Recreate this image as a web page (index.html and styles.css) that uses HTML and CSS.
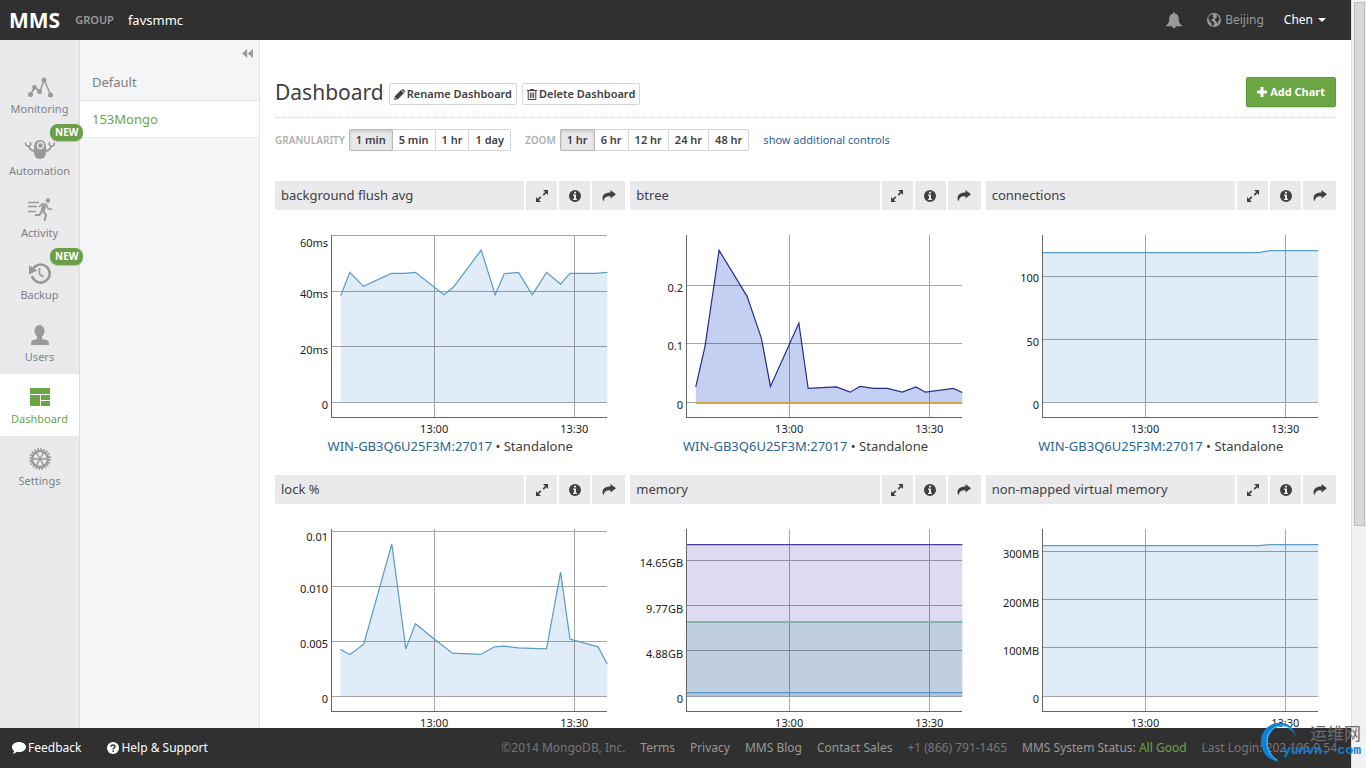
FILE: index.html
```html
<!DOCTYPE html>
<html lang="en">
<head>
<meta charset="utf-8">
<title>Dashboard | MMS</title>
<link rel="stylesheet" href="styles.css">
</head>
<body>
<svg class="defs" width="0" height="0" aria-hidden="true">
  <symbol id="expand" viewBox="0 0 12 12"><path d="M7 0h5v5l-1.700-1.700-2.500 2.500-1.200-1.200 2.500-2.500zM5 12H0V7l1.700 1.700 2.500-2.500 1.200 1.200-2.500 2.500z"/></symbol>
  <symbol id="info" viewBox="0 0 12 12"><path fill-rule="evenodd" d="M6 0a6 6 0 1 1 0 12A6 6 0 0 1 6 0zM5 1.700v1.800h2V1.700zM4 4.600v1.200h1v2.900H4V10h4V8.700H7V4.600z"/></symbol>
  <symbol id="share" viewBox="0 0 14 12"><path d="M8.500 0L14 4.300 8.500 8.600V6.200C4.800 6 2.600 7 1.300 11.500-.8 6.500 1.500 2.500 8.500 2.500z"/></symbol>
  <symbol id="pencil" viewBox="0 0 11 11"><path fill-rule="evenodd" d="M0 11l.8-3.800L7 1l3 3-6.200 6.200zM1.500 8.200l-.3 1.600 1.600-.3zM7.600.5l.3-.3c.4-.3.9-.3 1.300 0l1.600 1.600c.3.4.3.900 0 1.300l-.3.300z"/></symbol>
  <symbol id="trash" viewBox="0 0 10 11"><path d="M0 1.500h10M3.300 1.300V.5h3.400v.8M1.200 2v8.500h7.600V2M3.300 3.500V9M5 3.500V9M6.700 3.500V9" fill="none" stroke="currentColor"/></symbol>
</svg>
<div class="window">
  <div class="app">
    <header class="topbar">
      <a class="brand" href="#">MMS</a>
      <span class="group-label">GROUP</span>
      <a class="group-name" href="#">favsmmc</a>
      <div class="account">
        <button class="plain bell" aria-label="Notifications"><svg width="16" height="17" viewBox="0 0 16 17"><path fill="currentColor" d="M7 1.500C7-.2 9-.2 9 1.500c2.800.7 3.800 2.800 3.800 5.500 0 3.300.8 4.700 3.200 6.500v.8H9.800c-.3 2.700-3.300 2.700-3.600 0H0v-.8C2.400 11.700 3.200 10.300 3.200 7c0-2.700 1-4.800 3.800-5.500z"/></svg></button>
        <a class="zone" href="#"><svg width="14" height="14" viewBox="0 0 14 14"><circle cx="7" cy="7" r="7" fill="#999"/><path fill="#303030" d="M1.200 4.500L3 2.200l2-.7 1.500.7-1 1.300L7 5 5.200 6.200 4 7.500l2.200 1.300 1.200 1.400-1.200 3-1.400-.6L4.500 10 2.600 8.500zM9 2l2 .8L12.800 6l-1.500 2-.8 3-1.200-2.500L8 7.500 8.200 5.500 10 4.800z"/></svg>Beijing</a>
        <button class="plain user">Chen<span class="caret"></span></button>
      </div>
    </header>
    <div class="body">
      <nav class="nav">
        <a href="#"><svg width="26" height="22" viewBox="0 0 26 22"><path d="M3.500 18.500L8 11l5 5 4-12.500 7 16" fill="none" stroke="currentColor" stroke-width="1.500"/><g fill="currentColor"><circle cx="3.500" cy="18.500" r="2.500"/><circle cx="7.500" cy="11.500" r="2.400"/><circle cx="12.500" cy="15.500" r="2.500"/><circle cx="17" cy="4" r="2.500"/><circle cx="23.500" cy="19" r="2.500"/></g></svg>Monitoring</a>
        <a href="#"><span class="badge">NEW</span><svg width="32" height="22" viewBox="0 0 32 22"><rect x="10" y="2" width="12" height="19" rx="6" fill="currentColor"/><circle cx="16.500" cy="7.500" r="3" fill="none" stroke="#eaeaec" stroke-width="1.400"/><path d="M10 13C7 12.500 5.500 11 4.500 7.500M22 13c3-.5 4.500-2 5.500-5.500" fill="none" stroke="currentColor" stroke-width="2"/><path d="M1.500 4.500L2 7.500l3 .7 2-2-.7-2.200M30.500 4.500L30 7.500l-3 .7-2-2 .7-2.200" fill="none" stroke="currentColor" stroke-width="1.500"/></svg>Automation</a>
        <a href="#"><svg width="26" height="24" viewBox="0 0 26 24"><g fill="none" stroke="currentColor"><path d="M1 4.500h11M1 8.500h9M1 13.500h8" stroke-width="1.300"/><path d="M12 9l3-3h4l2 4.500 4 1" stroke-width="1.600"/><path d="M17.500 7L15.500 13" stroke-width="4"/><path d="M15 13l-2.500 4H8M16 13l3 4-1.500 6" stroke-width="2"/></g><circle cx="21" cy="2.500" r="2.200" fill="currentColor"/></svg>Activity</a>
        <a href="#"><span class="badge">NEW</span><svg width="24" height="22" viewBox="0 0 24 22"><path d="M4.600 7.500A9 9 0 1 1 4 14" fill="none" stroke="currentColor" stroke-width="2.600"/><path d="M1 3.500l8.500 5L1 12.500z" fill="currentColor"/><path d="M11.500 6v6l4 3" fill="none" stroke="currentColor" stroke-width="1.700"/></svg>Backup</a>
        <a href="#"><svg width="18" height="22" viewBox="0 0 18 22"><ellipse cx="8.500" cy="7" rx="5" ry="6" fill="currentColor"/><path fill="currentColor" d="M6 12h5v3l6 1.500c.8 1 1 3 1 4.500H0c0-1.500.2-3.500 1-4.500L6 15z"/></svg>Users</a>
        <a class="active" href="#" aria-current="page"><svg width="20" height="18" viewBox="0 0 20 18"><path fill="currentColor" d="M0 0h20v6H0zM0 7h10v11H0zM11 7h9v5h-9zM11 13h9v5h-9z"/></svg>Dashboard</a>
        <a href="#"><svg width="22" height="22" viewBox="0 0 22 22"><g fill="none" stroke="currentColor"><circle cx="11" cy="11" r="8" stroke-width="2.400"/><circle cx="11" cy="11" r="10" stroke-width="2" stroke-dasharray="1.570 1.570"/><path d="M3 11h16M7 4l8 14M15 4L7 18" stroke-width="1.500"/></g></svg>Settings</a>
      </nav>
      <aside class="side">
        <button class="plain collapse" aria-label="Collapse"><svg width="11" height="9" viewBox="0 0 11 9"><path fill="currentColor" d="M5.200 0v9L0 4.500zM11 0v9L5.800 4.500z"/></svg></button>
        <a href="#">Default</a>
        <a class="active" href="#" aria-current="page">153Mongo</a>
      </aside>
      <main class="main">
        <div class="title-row">
          <h1>Dashboard</h1>
          <button class="btn"><svg width="11" height="11" fill="currentColor"><use href="#pencil"/></svg>Rename Dashboard</button>
          <button class="btn"><svg width="10" height="11"><use href="#trash"/></svg>Delete Dashboard</button>
          <button class="btn add"><svg width="10" height="10" viewBox="0 0 10 10"><path fill="currentColor" d="M3.500 0h3v3.500H10v3H6.500V10h-3V6.500H0v-3h3.500z"/></svg>Add Chart</button>
        </div>
        <div class="controls">
          <span class="ctl-label" id="gran">GRANULARITY</span>
          <div class="segmented" role="group" aria-labelledby="gran"><button class="on">1 min</button><button>5 min</button><button>1 hr</button><button>1 day</button></div>
          <span class="ctl-label" id="zoom">ZOOM</span>
          <div class="segmented" role="group" aria-labelledby="zoom"><button class="on">1 hr</button><button>6 hr</button><button>12 hr</button><button>24 hr</button><button>48 hr</button></div>
          <a href="#">show additional controls</a>
        </div>
        <div class="charts">
          <section class="panel">
            <div class="panel-head"><h2>background flush avg</h2><button aria-label="Expand"><svg width="12" height="12"><use href="#expand"/></svg></button><button aria-label="Info"><svg width="12" height="12"><use href="#info"/></svg></button><button aria-label="Share"><svg width="14" height="12"><use href="#share"/></svg></button></div>
            <svg class="plot" viewBox="0 0 350 226">
              <path class="area blue" d="M65.700 192V85.700L74.700 62.300 88.300 76.300 116.300 63.300H129L140.300 62.300 168.700 84.700 178.300 77 206 40 220 84.700 229 63.700 243.300 62.300 257 84.700 271.300 62.300 285.300 74 294.700 63.300H320L332 62.300V192z"/>
              <path class="grid" d="M57 25.500h275M57 81.500h275M57 136.500h275M57 192.500h275M159.500 25v182M299.500 25v182"/>
              <path class="line blue" d="M65.700 85.700L74.700 62.300 88.300 76.300 116.300 63.300H129L140.300 62.300 168.700 84.700 178.300 77 206 40 220 84.700 229 63.700 243.300 62.300 257 84.700 271.300 62.300 285.300 74 294.700 63.300H320L332 62.300"/>
              <path class="axis" d="M56.500 25v182.500H332"/>
              <g class="ylab"><text x="53" y="37">60ms</text><text x="53" y="88">40ms</text><text x="53" y="144">20ms</text><text x="53" y="199">0</text></g>
              <g class="xlab"><text x="159" y="223">13:00</text><text x="299" y="223">13:30</text></g>
            </svg>
            <p class="host"><a href="#">WIN-GB3Q6U25F3M:27017</a> • Standalone</p>
          </section>
          <section class="panel">
            <div class="panel-head"><h2>btree</h2><button aria-label="Expand"><svg width="12" height="12"><use href="#expand"/></svg></button><button aria-label="Info"><svg width="12" height="12"><use href="#info"/></svg></button><button aria-label="Share"><svg width="14" height="12"><use href="#share"/></svg></button></div>
            <svg class="plot" viewBox="0 0 350 226">
              <path class="area navy" d="M65.700 193V176.700L75 136 89 40.300 117 86.300 131.300 128.300 140.300 176.300 168.700 113 178 178.300 206 176.700 220 182 229.700 176.300 243.700 178.300H257.300L272 182 285.700 176.700 295.300 182 323 178.300 332 182.300V193z"/>
              <path class="grid" d="M57 75.500h275M57 133.500h275M57 192.500h275M159.500 25v182M299.500 25v182"/>
              <path class="line gold" d="M65.700 192.800H332"/>
              <path class="line navy" d="M65.700 176.700L75 136 89 40.300 117 86.300 131.300 128.300 140.300 176.300 168.700 113 178 178.300 206 176.700 220 182 229.700 176.300 243.700 178.300H257.300L272 182 285.700 176.700 295.300 182 323 178.300 332 182.300"/>
              <path class="axis" d="M56.500 25v182.500H332"/>
              <g class="ylab"><text x="53" y="82">0.2</text><text x="53" y="140">0.1</text><text x="53" y="199">0</text></g>
              <g class="xlab"><text x="159" y="223">13:00</text><text x="299" y="223">13:30</text></g>
            </svg>
            <p class="host"><a href="#">WIN-GB3Q6U25F3M:27017</a> • Standalone</p>
          </section>
          <section class="panel">
            <div class="panel-head"><h2>connections</h2><button aria-label="Expand"><svg width="12" height="12"><use href="#expand"/></svg></button><button aria-label="Info"><svg width="12" height="12"><use href="#info"/></svg></button><button aria-label="Share"><svg width="14" height="12"><use href="#share"/></svg></button></div>
            <svg class="plot" viewBox="0 0 350 226">
              <path class="area blue" d="M57 192V42.500H272L284 40.500H332V192z"/>
              <path class="grid" d="M57 66.500h275M57 129.500h275M57 192.500h275M159.500 25v182M299.500 25v182"/>
              <path class="line blue" d="M57 42.500H272L284 40.500H332"/>
              <path class="axis" d="M56.500 25v182.500H332"/>
              <g class="ylab"><text x="53" y="72">100</text><text x="53" y="136">50</text><text x="53" y="199">0</text></g>
              <g class="xlab"><text x="159" y="223">13:00</text><text x="299" y="223">13:30</text></g>
            </svg>
            <p class="host"><a href="#">WIN-GB3Q6U25F3M:27017</a> • Standalone</p>
          </section>
          <section class="panel">
            <div class="panel-head"><h2>lock %</h2><button aria-label="Expand"><svg width="12" height="12"><use href="#expand"/></svg></button><button aria-label="Info"><svg width="12" height="12"><use href="#info"/></svg></button><button aria-label="Share"><svg width="14" height="12"><use href="#share"/></svg></button></div>
            <svg class="plot" viewBox="0 0 350 226">
              <path class="area blue" d="M65.300 192V145.300L74.700 150.300 88.700 140 116.700 40 130.700 144.700 140.300 119.700 159.700 135.300 177.300 149 205.300 150.300 219.300 142.700 229 142 243.300 143.700 271.300 144.700 285.300 68 294.700 135 322.700 142.700 332 160V192z"/>
              <path class="grid" d="M57 27.500h275M57 82.500h275M57 137.500h275M57 192.500h275M159.500 25v182M299.500 25v182"/>
              <path class="line blue" d="M65.300 145.300L74.700 150.300 88.700 140 116.700 40 130.700 144.700 140.300 119.700 159.700 135.300 177.300 149 205.300 150.300 219.300 142.700 229 142 243.300 143.700 271.300 144.700 285.300 68 294.700 135 322.700 142.700 332 160"/>
              <path class="axis" d="M56.500 25v182.500H332"/>
              <g class="ylab"><text x="53" y="37">0.01</text><text x="53" y="89">0.010</text><text x="53" y="144">0.005</text><text x="53" y="199">0</text></g>
              <g class="xlab"><text x="159" y="223">13:00</text><text x="299" y="223">13:30</text></g>
            </svg>
          </section>
          <section class="panel">
            <div class="panel-head"><h2>memory</h2><button aria-label="Expand"><svg width="12" height="12"><use href="#expand"/></svg></button><button aria-label="Info"><svg width="12" height="12"><use href="#info"/></svg></button><button aria-label="Share"><svg width="14" height="12"><use href="#share"/></svg></button></div>
            <svg class="plot" viewBox="0 0 350 226">
              <path fill="#dedaf2" d="M57 40h275v78H57z"/><path fill="#c0cfde" d="M57 118h275v70H57z"/><path fill="#adc5dc" d="M57 188h275v4H57z"/>
              <path class="grid" d="M57 56.500h275M57 101.500h275M57 146.500h275M57 192.500h275M159.500 25v182M299.500 25v182"/>
              <path class="line violet" d="M57 40.500h275"/><path class="line green" d="M57 117.800h275"/><path class="line mid" d="M57 188.500h275"/>
              <path class="axis" d="M56.500 25v182.500H332"/>
              <g class="ylab"><text x="53" y="63">14.65GB</text><text x="53" y="109">9.77GB</text><text x="53" y="154">4.88GB</text><text x="53" y="199">0</text></g>
              <g class="xlab"><text x="159" y="223">13:00</text><text x="299" y="223">13:30</text></g>
            </svg>
          </section>
          <section class="panel">
            <div class="panel-head"><h2>non-mapped virtual memory</h2><button aria-label="Expand"><svg width="12" height="12"><use href="#expand"/></svg></button><button aria-label="Info"><svg width="12" height="12"><use href="#info"/></svg></button><button aria-label="Share"><svg width="14" height="12"><use href="#share"/></svg></button></div>
            <svg class="plot" viewBox="0 0 350 226">
              <path class="area blue" d="M57 192V41.500H272L284 40.500H332V192z"/>
              <path class="grid" d="M57 47.500h275M57 95.500h275M57 143.500h275M57 192.500h275M159.500 25v182M299.500 25v182"/>
              <path class="line blue" d="M57 41.500H272L284 40.500H332"/>
              <path class="axis" d="M56.500 25v182.500H332"/>
              <g class="ylab"><text x="53" y="54">300MB</text><text x="53" y="103">200MB</text><text x="53" y="151">100MB</text><text x="53" y="199">0</text></g>
              <g class="xlab"><text x="159" y="223">13:00</text><text x="299" y="223">13:30</text></g>
            </svg>
          </section>
        </div>
      </main>
    </div>
    <footer class="footer">
      <a class="strong" href="#"><svg width="14" height="12" viewBox="0 0 14 12"><path fill="currentColor" d="M7 0c4 0 7 2.200 7 4.900S11 10 7 10c-.7 0-1.400-.1-2-.2C3.800 11 2.500 11.600.8 11.700c.8-.8 1.300-1.700 1.300-2.900C.8 7.900 0 6.500 0 4.900 0 2.200 3 0 7 0z"/></svg>Feedback</a>
      <a class="strong" href="#"><svg width="12" height="12" viewBox="0 0 12 12"><circle cx="6" cy="6" r="6" fill="currentColor"/><path d="M4 4.800C4 2.400 8 2.400 8 4.500 8 5.800 6.200 5.800 6.200 7.400M6.200 8.400v1.500" fill="none" stroke="#303030" stroke-width="1.500"/></svg>Help &amp; Support</a>
      <div class="foot-links">
        <span class="dim">©2014 MongoDB, Inc.</span>
        <a href="#">Terms</a><a href="#">Privacy</a><a href="#">MMS Blog</a><a href="#">Contact Sales</a>
        <span class="dim">+1 (866) 791-1465</span>
        <span>MMS System Status: <a class="good" href="#">All Good</a></span>
        <span class="dim">Last Login: 202.106.9.54</span>
      </div>
    </footer>
  </div>
  <div class="scrollbar"><div class="thumb"></div></div>
  <div class="watermark">
    <svg width="38" height="42" viewBox="0 0 38 42"><path fill="#0b84d6" d="M33 8C24-4 0 2 1 22c1 11 9 18 19 19C6 33 4 16 14 8c6-4 13-4 19 0z"/><path d="M31 8C20 0 7 8 7 20c0 9 4 15 10 19" fill="none" stroke="#6cc4f5"/><path fill="#0b84d6" d="M30 6c3 2 5 5 5 9-1-3-3-6-7-7z"/></svg>
    <span class="wm-cn" lang="zh">运维网</span>
    <span class="wm-url">yunvn. com</span>
  </div>
</div>
</body>
</html>
```
FILE: styles.css
```css
* { box-sizing: border-box; }
body {
  margin: 0;
  font: 12px/20px "Noto Sans", "Open Sans", sans-serif;
  color: #404040;
  background: #fff;
}
a { color: #2a6496; text-decoration: none; }
button { font: inherit; color: inherit; cursor: pointer; }
.defs { position: absolute; }
svg { flex: none; }

.window { position: relative; display: flex; height: 100vh; overflow: hidden; }
.app { flex: 1; min-width: 0; display: flex; flex-direction: column; }

.topbar {
  flex: none;
  height: 40px;
  display: flex;
  align-items: center;
  padding: 0 25px 0 9px;
  background: #303030;
}
.brand { color: #fff; font-size: 21px; font-weight: 700; margin-right: 15px; }
.group-label { color: #999; font-size: 11px; font-weight: 600; margin-right: 14px; }
.group-name { color: #fff; font-size: 13px; }
.account { margin-left: auto; display: flex; align-items: center; }
.plain { border: 0; padding: 0; background: none; display: flex; align-items: center; }
.bell { color: #999; margin-right: 25px; }
.zone { display: flex; align-items: center; gap: 4px; color: #999; margin-right: 20px; }
.user { color: #fff; gap: 5px; }
.caret { border: 4px solid transparent; border-top-color: #fff; border-bottom: 0; }

.body { flex: 1; min-height: 0; display: flex; }
.nav {
  flex: none;
  width: 80px;
  padding-top: 24px;
  background: #eaeaec;
  border-right: 1px solid #dcdcde;
}
.nav > a {
  position: relative;
  display: flex;
  flex-direction: column;
  align-items: center;
  justify-content: flex-end;
  gap: 1px;
  height: 62px;
  padding-bottom: 7px;
  color: #7d8084;
  font-size: 11px;
}
.nav svg { color: #999; }
.nav > a.active, .nav .active svg { color: #6aa643; }
.nav > a.active { background: #fff; }
.nav .active svg { margin-bottom: 2px; }
.badge {
  position: absolute;
  top: -2px;
  left: 50px;
  z-index: 1;
  padding: 0 5px;
  border-radius: 8px;
  background: #6a9f47;
  box-shadow: 0 1px 1px #b9c4b2;
  color: #fff;
  font-size: 10px;
  line-height: 17px;
  font-weight: 700;
}

.side { flex: none; width: 180px; background: #f4f5f7; border-right: 1px solid #e4e5e7; }
.collapse { margin-left: auto; height: 24px; padding: 2px 6px 0 0; color: #999; }
.side a {
  display: block;
  padding: 8px 12px;
  font-size: 13px;
  color: #7d8084;
}
.side a.active {
  background: #fff;
  color: #6aa643;
  border: solid #e7e8ea;
  border-width: 1px 0;
}

.main { flex: 1; min-width: 0; padding: 37px 15px 0; overflow: hidden; }
.title-row {
  display: flex;
  align-items: center;
  gap: 5px;
  height: 41px;
  padding-bottom: 10px;
  border-bottom: 1px dotted #ccc;
}
h1 { margin: 0; font-size: 21px; font-weight: 400; line-height: 30px; }
.btn {
  display: flex;
  align-items: center;
  gap: 2px;
  height: 22px;
  margin-top: 4px;
  padding: 0 4px;
  border: 1px solid #d6d8d8;
  border-radius: 2px;
  background: #fff;
  font-size: 11px;
  font-weight: 600;
}
.add {
  gap: 3px;
  height: 30px;
  margin: 0 0 0 auto;
  padding: 0 10px;
  border-color: #5f9a3b;
  background: #6aa643;
  box-shadow: 0 1px 2px #ccd8c4;
  color: #fff;
  font-weight: 700;
}

.controls { display: flex; align-items: center; margin: 11px 0 30px; height: 22px; }
.ctl-label { color: #b0b0b0; font-size: 10px; font-weight: 600; margin-right: 4px; }
.segmented { display: flex; margin-right: 14px; }
.segmented button {
  height: 22px;
  padding: 0 6px;
  border: 1px solid #d6d8d8;
  border-left-width: 0;
  background: #fff;
  font-size: 11px;
  font-weight: 600;
  line-height: 20px;
}
.segmented button:first-child { border-left-width: 1px; border-radius: 2px 0 0 2px; }
.segmented button:last-child { border-radius: 0 2px 2px 0; }
.segmented .on { background: #e8e8ea; border-color: #b8b8ba; box-shadow: inset 0 2px 3px #d0d0d2; }
.controls > a { font-size: 11px; }

.charts { display: grid; grid-template-columns: repeat(3, 1fr); gap: 19px 5px; }
.panel { min-width: 0; }
.panel-head { display: flex; gap: 2px; height: 29px; }
.panel-head h2 {
  flex: 1;
  margin: 0;
  padding: 0 6px;
  background: #eaeaec;
  font-size: 13px;
  font-weight: 400;
  line-height: 29px;
}
.panel-head button {
  display: flex;
  align-items: center;
  justify-content: center;
  width: 31px;
  border: 0;
  padding: 0;
  background: #eaeaec;
}
.panel-head button:last-child { width: 33px; }
.panel-head svg { fill: currentColor; }
.plot { display: block; width: 100%; height: auto; }
.plot text { font-size: 11px; fill: #222; }
.ylab { text-anchor: end; }
.xlab { text-anchor: middle; }
.grid { stroke: #000; stroke-opacity: .35; shape-rendering: crispEdges; }
.axis { fill: none; stroke: #666; shape-rendering: crispEdges; }
.line { fill: none; stroke-width: 1.2; }
.area.blue { fill: #e0ecf8; }
.area.navy { fill: #c4d0f1; }
.line.blue { stroke: #5b9bc4; }
.line.navy { stroke: #262e8c; }
.line.gold { stroke: #cda24d; stroke-width: 2; }
.line.violet { stroke: #4c3f9c; }
.line.green { stroke: #7fb5a2; stroke-width: 2; }
.line.mid { stroke: #5a93cc; }
.host { margin: 0; text-align: center; font-size: 13px; }

.footer {
  flex: none;
  height: 40px;
  display: flex;
  align-items: center;
  gap: 26px;
  padding: 0 14px 0 12px;
  background: #303030;
  color: #999;
  white-space: nowrap;
}
.footer a { color: #999; }
.footer .strong { display: flex; align-items: center; gap: 2px; color: #fff; }
.footer .good { color: #6aa643; }
.foot-links { display: flex; gap: 15px; margin-left: auto; }
.dim { color: #777; }

.scrollbar {
  flex: none;
  width: 15px;
  padding: 2px 1px 0 2px;
  background: #f1f1f1;
  border-left: 1px solid #dcdcdc;
}
.thumb { height: 524px; border: 1px solid #bcbcbc; background: #d8d8d8; }

.watermark { position: absolute; right: 5px; bottom: 5px; width: 101px; height: 42px; }
.watermark span { position: absolute; white-space: nowrap; }
.wm-cn {
  right: 0;
  top: 2px;
  color: #6b6b70;
  font: 17px/20px "Noto Sans CJK SC", sans-serif;
}
.wm-url {
  right: 0;
  top: 21px;
  color: #0b7fd8;
  font: 700 13px/18px "Liberation Mono", monospace;
}
```
